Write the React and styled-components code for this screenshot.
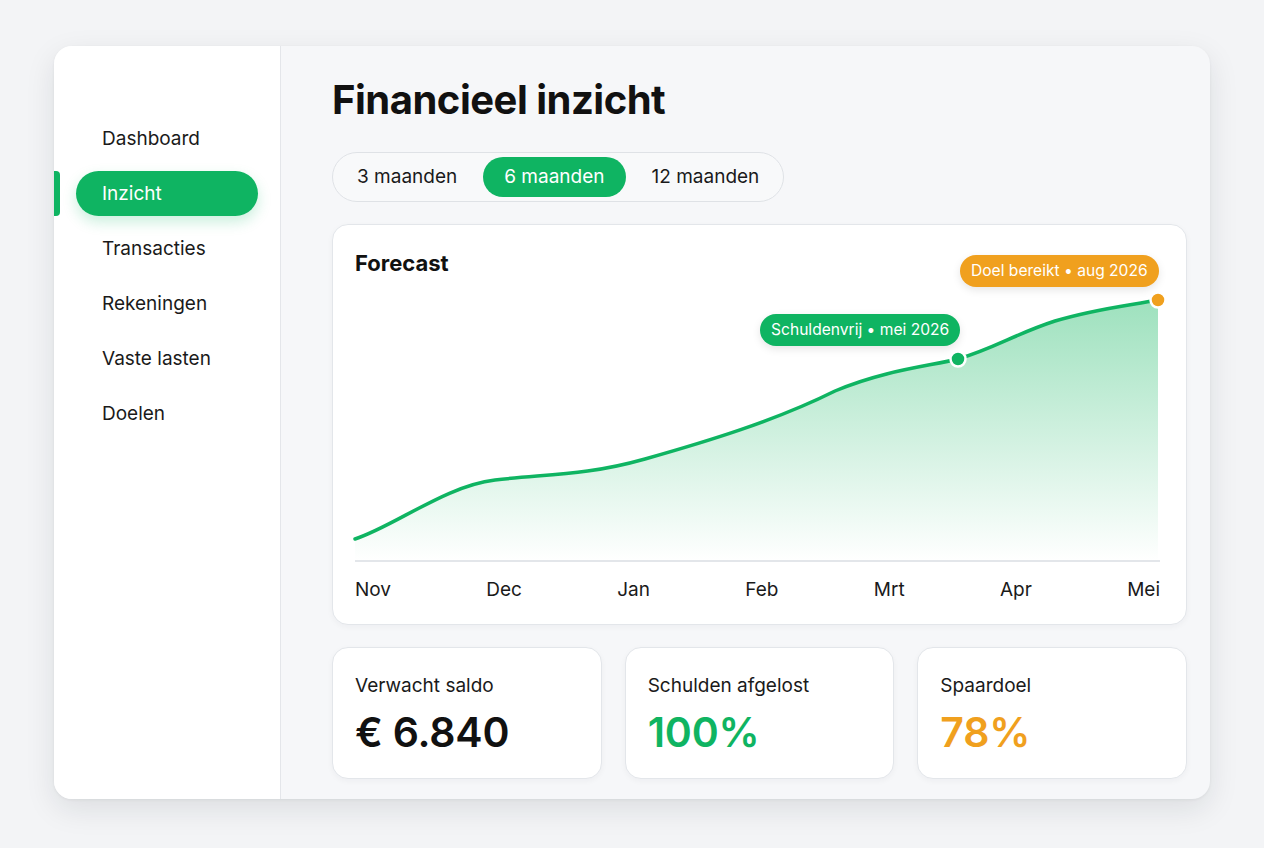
import React, { useState } from "react";
import styled, { createGlobalStyle } from "styled-components";

const GREEN = "#0fb462";
const ORANGE = "#f0a01e";

const Global = createGlobalStyle`
  html, body {
    margin: 0;
    padding: 0;
    background: #f3f4f6;
    font-family: Inter, "Noto Sans", "Liberation Sans", sans-serif;
    color: #141414;
  }
  * { box-sizing: border-box; }
`;

const Page = styled.div`
  width: 1264px;
  height: 848px;
  padding: 46px 54px 49px 54px;
`;

const Frame = styled.div`
  display: flex;
  height: 753px;
  border-radius: 18px;
  overflow: hidden;
  background: #f6f7f9;
  box-shadow: 0 10px 30px rgba(20, 30, 40, 0.1), 0 1px 3px rgba(20, 30, 40, 0.06);
`;

const Sidebar = styled.nav`
  width: 227px;
  flex-shrink: 0;
  background: #fff;
  border-right: 1px solid #e4e6ea;
  padding-top: 70px;
  display: flex;
  flex-direction: column;
  gap: 10px;
`;

const NavItem = styled.div`
  position: relative;
  margin-left: 22px;
  width: 182px;
  height: 45px;
  border-radius: 23px;
  padding-left: 26px;
  display: flex;
  align-items: center;
  font-size: 19px;
  color: ${(p) => (p.$active ? "#fff" : "#1a1a1a")};
  background: ${(p) => (p.$active ? GREEN : "transparent")};
  box-shadow: ${(p) => (p.$active ? "0 6px 14px rgba(15, 180, 98, 0.22)" : "none")};
  cursor: pointer;

  &::before {
    content: "";
    display: ${(p) => (p.$active ? "block" : "none")};
    position: absolute;
    left: -22px;
    top: 0;
    width: 6px;
    height: 45px;
    border-radius: 0 4px 4px 0;
    background: ${GREEN};
  }
`;

const Main = styled.main`
  flex: 1;
  padding: 31px 24px 20px 51px;
  display: flex;
  flex-direction: column;
`;

const Title = styled.h1`
  margin: 0;
  font-size: 40px;
  font-weight: 700;
  letter-spacing: -0.5px;
  line-height: 46px;
  color: #111;
`;

const Segmented = styled.div`
  margin-top: 29px;
  align-self: flex-start;
  display: flex;
  align-items: center;
  gap: 6px;
  height: 50px;
  padding: 0 4px;
  border: 1px solid #dfe2e6;
  border-radius: 25px;
  background: #f8f9fa;
`;

const Segment = styled.button`
  border: none;
  height: 40px;
  padding: 0 ${(p) => p.$pad}px;
  border-radius: 20px;
  font-family: inherit;
  font-size: 19px;
  color: ${(p) => (p.$active ? "#fff" : "#1a1a1a")};
  background: ${(p) => (p.$active ? GREEN : "transparent")};
  cursor: pointer;
`;

const Card = styled.section`
  background: #fff;
  border: 1px solid #e3e6ea;
  border-radius: 16px;
  box-shadow: 0 2px 6px rgba(20, 30, 40, 0.04);
`;

const ChartCard = styled(Card)`
  margin-top: 22px;
  height: 402px;
  padding: 20px 26px 0 22px;
`;

const ChartTitle = styled.h2`
  margin: 0;
  height: 31px;
  font-size: 22px;
  font-weight: 700;
  line-height: 36px;
  color: #111;
`;

const Plot = styled.div`
  position: relative;
  width: 805px;
  height: 286px;

  svg {
    display: block;
    overflow: visible;
  }
`;

const Badge = styled.div`
  position: absolute;
  left: ${(p) => p.$x}px;
  top: ${(p) => p.$y}px;
  height: 32px;
  padding: 0 11px;
  border-radius: 16px;
  display: flex;
  align-items: center;
  font-size: 15.6px;
  color: #fff;
  white-space: nowrap;
  background: ${(p) => p.$color};
  box-shadow: 0 3px 8px rgba(0, 0, 0, 0.1);
`;

const Axis = styled.div`
  display: flex;
  justify-content: space-between;
  width: 805px;
  margin-top: 16px;
  font-size: 19px;
  color: #1a1a1a;
`;

const Stats = styled.div`
  margin-top: 22px;
  display: grid;
  grid-template-columns: repeat(3, 1fr);
  gap: 23px;
`;

const StatCard = styled(Card)`
  height: 132px;
  padding: 25px 22px 0;
`;

const StatLabel = styled.div`
  font-size: 19px;
  line-height: 26px;
  color: #1a1a1a;
`;

const StatValue = styled.div`
  margin-top: 8px;
  font-size: 41px;
  font-weight: 600;
  line-height: 50px;
  letter-spacing: -0.2px;
  color: ${(p) => p.$color || "#111"};
`;

const curve =
  "M0 263 C 40 250, 90 210, 140 204 C 190 198, 230 200, 290 183 C 350 166, 420 145, 480 115 C 530 94, 575 90, 603 83 C 640 72, 660 58, 700 45 C 740 33, 770 30, 803 24";

const nav = ["Dashboard", "Inzicht", "Transacties", "Rekeningen", "Vaste lasten", "Doelen"];
const months = ["Nov", "Dec", "Jan", "Feb", "Mrt", "Apr", "Mei"];
const ranges = [
  { label: "3 maanden", pad: 20 },
  { label: "6 maanden", pad: 21 },
  { label: "12 maanden", pad: 20 },
];

export default function App() {
  const [range, setRange] = useState("6 maanden");
  const [active, setActive] = useState("Inzicht");

  return (
    <Page>
      <Global />
      <Frame>
        <Sidebar>
          {nav.map((n) => (
            <NavItem key={n} $active={n === active} onClick={() => setActive(n)}>
              {n}
            </NavItem>
          ))}
        </Sidebar>
        <Main>
          <Title>Financieel inzicht</Title>
          <Segmented>
            {ranges.map((r) => (
              <Segment
                key={r.label}
                $pad={r.pad}
                $active={r.label === range}
                onClick={() => setRange(r.label)}
              >
                {r.label}
              </Segment>
            ))}
          </Segmented>

          <ChartCard>
            <ChartTitle>Forecast</ChartTitle>
            <Plot>
              <svg width="805" height="286" viewBox="0 0 805 286">
                <defs>
                  <linearGradient id="fill" x1="0" y1="0" x2="0" y2="1">
                    <stop offset="0%" stopColor="#3cc37c" stopOpacity="0.5" />
                    <stop offset="60%" stopColor="#3cc37c" stopOpacity="0.2" />
                    <stop offset="100%" stopColor="#3cc37c" stopOpacity="0" />
                  </linearGradient>
                </defs>
                <path d={`${curve} L 803 285 L 0 285 Z`} fill="url(#fill)" />
                <line x1="0" y1="285" x2="805" y2="285" stroke="#e3e6ea" strokeWidth="2" />
                <path d={curve} fill="none" stroke={GREEN} strokeWidth="3.5" strokeLinecap="round" />
                <circle cx="603" cy="83" r="7.5" fill={GREEN} stroke="#fff" strokeWidth="2.5" />
                <circle cx="803" cy="24" r="7.5" fill={ORANGE} stroke="#fff" strokeWidth="2.5" />
              </svg>
              <Badge $x={405} $y={38} $color={GREEN}>Schuldenvrij • mei 2026</Badge>
              <Badge $x={605} $y={-21} $color={ORANGE}>Doel bereikt • aug 2026</Badge>
            </Plot>
            <Axis>
              {months.map((m) => (
                <span key={m}>{m}</span>
              ))}
            </Axis>
          </ChartCard>

          <Stats>
            <StatCard>
              <StatLabel>Verwacht saldo</StatLabel>
              <StatValue>€ 6.840</StatValue>
            </StatCard>
            <StatCard>
              <StatLabel>Schulden afgelost</StatLabel>
              <StatValue $color={GREEN}>100%</StatValue>
            </StatCard>
            <StatCard>
              <StatLabel>Spaardoel</StatLabel>
              <StatValue $color={ORANGE}>78%</StatValue>
            </StatCard>
          </Stats>
        </Main>
      </Frame>
    </Page>
  );
}
